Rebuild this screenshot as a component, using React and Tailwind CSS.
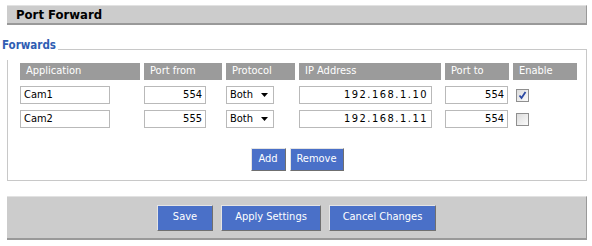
import { useState } from 'react';

const font = { fontFamily: '"DejaVu Sans Condensed", "Liberation Sans", sans-serif' };

const rows = [
  { app: 'Cam1', from: '554', proto: 'Both', ip: '192.168.1.10', to: '554', on: true },
  { app: 'Cam2', from: '555', proto: 'Both', ip: '192.168.1.11', to: '554', on: false },
];

const headers = ['Application', 'Port from', 'Protocol', 'IP Address', 'Port to', 'Enable'];

function Btn({ className, children }) {
  return (
    <button
      className={`border border-t-[#e4e4e4] border-l-[#e4e4e4] border-b-[#6f6f6f] border-r-[#6f6f6f] bg-[#4a70c8] text-[11px] text-white ${className}`}
    >
      {children}
    </button>
  );
}

function Field({ value, className, right }) {
  return (
    <div
      className={`flex h-[18px] items-center border border-[#b9b9b9] bg-white px-[3px] text-[11px] text-black ${
        right ? 'justify-end' : ''
      } ${className}`}
    >
      {value}
    </div>
  );
}

function Check({ checked }) {
  return (
    <div className="ml-[3px] flex h-[13px] w-[13px] items-center justify-center border border-[#8f8f8f] bg-gradient-to-br from-[#dcdcdc] to-[#fbfbfb]">
      {checked && (
        <svg width="9" height="9" viewBox="0 0 9 9">
          <path d="M1.5 4.5 L3.5 7 L7.5 1" fill="none" stroke="#2c49a3" strokeWidth="1.8" />
        </svg>
      )}
    </div>
  );
}

export default function App() {
  const [data] = useState(rows);

  return (
    <div className="h-[246px] w-[592px] bg-white pl-[7px] pt-[5px]" style={font}>
      {/* Title bar */}
      <div className="flex h-[20px] w-[580px] items-center border-t border-t-[#e2e2e2] border-b-2 border-b-[#999] border-r border-r-[#999] bg-[#cccccc] pl-[9px]">
        <span className="text-[13px] font-bold text-black">Port Forward</span>
      </div>

      {/* Forwards */}
      <fieldset className="mt-[13px] w-[580px] border border-[#c8c8c8] pb-[9px]">
        <legend className="-ml-[6px] pb-[8px] pr-[2px] text-[11.5px] leading-[14px] font-bold text-[#2f5db3]">
          Forwards
        </legend>
        <div className="grid grid-cols-[120px_78px_69px_142px_64px_64px] gap-x-[4px] gap-y-[6px] pl-[12px] pt-[3px]">
          {headers.map((h) => (
            <div key={h} className="flex h-[17px] items-center bg-[#9b9b9b] pl-[6px] text-[11px] text-white">
              {h}
            </div>
          ))}
          {data.map((r) => [
            <Field key={r.app + 'a'} value={r.app} className="w-[90px]" />,
            <Field key={r.app + 'f'} value={r.from} className="w-[62px]" right />,
            <div
              key={r.app + 'p'}
              className="flex h-[18px] w-[48px] items-center justify-between border border-[#b9b9b9] bg-white pl-[3px] pr-[5px] text-[11px] text-black"
            >
              {r.proto}
              <svg width="7" height="4" viewBox="0 0 7 4">
                <path d="M0 0 H7 L3.5 4 Z" fill="#000" />
              </svg>
            </div>,
            <Field key={r.app + 'i'} value={r.ip} className="w-[133px] tracking-[1.5px]" right />,
            <Field key={r.app + 't'} value={r.to} className="w-[63px]" right />,
            <div key={r.app + 'e'} className="flex h-[18px] items-center">
              <Check checked={r.on} />
            </div>,
          ])}
        </div>
        <div className="mt-[20px] flex justify-center gap-[4px]">
          <Btn className="h-[23px] w-[35px]">Add</Btn>
          <Btn className="h-[23px] w-[54px]">Remove</Btn>
        </div>
      </fieldset>

      {/* Footer */}
      <div className="mt-[15px] flex h-[44px] w-[580px] items-center justify-center gap-[8px] border-t border-t-[#e2e2e2] border-b-2 border-b-[#999] border-r border-r-[#999] bg-[#cccccc]">
        <Btn className="h-[26px] w-[56px]">Save</Btn>
        <Btn className="h-[26px] w-[100px]">Apply Settings</Btn>
        <Btn className="h-[26px] w-[107px]">Cancel Changes</Btn>
      </div>
    </div>
  );
}
